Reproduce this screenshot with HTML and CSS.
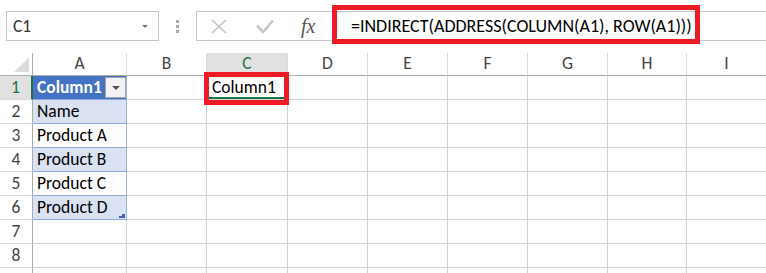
FILE: index.html
```html
<!DOCTYPE html>
<html>
<head>
<meta charset="utf-8">
<link rel="stylesheet" href="styles.css">
</head>
<body>
<div class="app">
  <div class="toolbar">
    <div class="namebox"><span>C1</span><span class="nb-arrow"></span></div>
    <div class="grip"><i></i><i></i><i></i></div>
    <div class="fbar">
      <svg class="ic-x" width="16" height="15" viewBox="0 0 16 15"><path d="M1 1 L15 14 M15 1 L1 14" stroke="#c3c3c3" stroke-width="1.5" fill="none"/></svg>
      <svg class="ic-ok" width="18" height="15" viewBox="0 0 18 15"><path d="M1 6.5 L7 13 L17 1.5" stroke="#c8c8c8" stroke-width="2.6" fill="none"/></svg>
      <span class="fx">fx</span>
      <span class="formula">=INDIRECT(ADDRESS(COLUMN(A1), ROW(A1)))</span>
    </div>
  </div>
  <div class="callout callout-formula"></div>
  <div class="sheet">
    <div class="corner"><svg width="33" height="23" viewBox="0 0 33 23"><polygon points="14,19 29,19 29,4" fill="#dcdcdc"/></svg></div>
    <div class="ch">A</div><div class="ch">B</div><div class="ch ch-sel">C</div><div class="ch">D</div><div class="ch">E</div><div class="ch">F</div><div class="ch">G</div><div class="ch">H</div><div class="ch">I</div>

    <div class="rh rh-sel">1</div>
    <div class="c t-head"><span>Column1</span><span class="filter-btn"><i></i></span></div>
    <div class="c"></div>
    <div class="c c-sel">Column1<div class="callout callout-cell"></div></div>
    <div class="c"></div><div class="c"></div><div class="c"></div><div class="c"></div><div class="c"></div><div class="c"></div>

    <div class="rh">2</div>
    <div class="c t-band">Name</div>
    <div class="c"></div><div class="c"></div><div class="c"></div><div class="c"></div><div class="c"></div><div class="c"></div><div class="c"></div><div class="c"></div>

    <div class="rh">3</div>
    <div class="c t-row">Product A</div>
    <div class="c"></div><div class="c"></div><div class="c"></div><div class="c"></div><div class="c"></div><div class="c"></div><div class="c"></div><div class="c"></div>

    <div class="rh">4</div>
    <div class="c t-band">Product B</div>
    <div class="c"></div><div class="c"></div><div class="c"></div><div class="c"></div><div class="c"></div><div class="c"></div><div class="c"></div><div class="c"></div>

    <div class="rh">5</div>
    <div class="c t-row">Product C</div>
    <div class="c"></div><div class="c"></div><div class="c"></div><div class="c"></div><div class="c"></div><div class="c"></div><div class="c"></div><div class="c"></div>

    <div class="rh">6</div>
    <div class="c t-band t-last">Product D<svg class="resize" width="6" height="4" viewBox="0 0 6 4"><polygon points="6,0 6,4 0,4 0,2 3,2 3,0" fill="#3f5fc2"/></svg></div>
    <div class="c"></div><div class="c"></div><div class="c"></div><div class="c"></div><div class="c"></div><div class="c"></div><div class="c"></div><div class="c"></div>

    <div class="rh">7</div>
    <div class="c"></div><div class="c"></div><div class="c"></div><div class="c"></div><div class="c"></div><div class="c"></div><div class="c"></div><div class="c"></div><div class="c"></div>

    <div class="rh">8</div>
    <div class="c"></div><div class="c"></div><div class="c"></div><div class="c"></div><div class="c"></div><div class="c"></div><div class="c"></div><div class="c"></div><div class="c"></div>

    <div class="rh"></div>
    <div class="c"></div><div class="c"></div><div class="c"></div><div class="c"></div><div class="c"></div><div class="c"></div><div class="c"></div><div class="c"></div><div class="c"></div>
  </div>
</div>
</body>
</html>
```

FILE: styles.css
```css
* { box-sizing: border-box; }

body {
  margin: 0;
  background: #fff;
  font-family: Carlito, Lato, "Liberation Sans", sans-serif;
  font-size: 17.5px;
  color: #000;
  overflow: hidden;
}

.app {
  position: relative;
  width: 766px;
  height: 273px;
  overflow: hidden;
}

/* ---------- toolbar ---------- */
.toolbar {
  display: flex;
  align-items: flex-start;
  height: 53px;
  padding: 11px 0 0 6px;
}

.namebox {
  width: 153px;
  height: 30px;
  border: 1px solid #c6c6c6;
  display: flex;
  align-items: center;
  justify-content: space-between;
  padding: 0 10px 0 6px;
  color: #333;
}

.nb-arrow {
  width: 0;
  height: 0;
  border-left: 3px solid transparent;
  border-right: 3px solid transparent;
  border-top: 3px solid #777;
}

.grip {
  margin-left: 17px;
  margin-top: 9px;
  display: flex;
  flex-direction: column;
  gap: 2px;
}

.grip i {
  display: block;
  width: 3px;
  height: 3px;
  background: #a6a6a6;
}

.fbar {
  margin-left: 17px;
  flex: 1;
  height: 30px;
  border: 1px solid #c6c6c6;
  border-right: 0;
  display: flex;
  align-items: center;
  white-space: nowrap;
}

.ic-x { margin-left: 14px; }
.ic-ok { margin-left: 29px; }

.fx {
  display: inline-block;
  width: 17px;
  margin-left: 27px;
  font-family: "Liberation Serif", serif;
  font-style: italic;
  font-size: 20px;
  color: #555;
  line-height: 1;
}

.formula {
  margin-left: 33px;
  font-size: 18px;
  color: #000;
}

.callout {
  position: absolute;
  border: 5px solid #ed1c24;
  z-index: 5;
}

.callout-formula {
  left: 332px;
  top: 5px;
  width: 368px;
  height: 39px;
}

/* ---------- sheet ---------- */
.sheet {
  display: grid;
  grid-template-columns: 33px 94px 80px 81px 80px 80px 80px 80px 79px 80px;
  grid-template-rows: 23px repeat(9, 24px);
}

.corner {
  border-right: 1px solid #ababab;
  border-bottom: 1px solid #ababab;
}
.corner svg { display: block; }

.ch {
  border-right: 1px solid #dadada;
  border-bottom: 1px solid #ababab;
  display: flex;
  align-items: flex-end;
  justify-content: center;
  padding-bottom: 3px;
  line-height: 1;
  color: #444;
}

.ch-sel {
  background: #e1e1e1;
  color: #217346;
  border-bottom: 2px solid #217346;
  padding-bottom: 2px;
}

.rh {
  border-right: 1px solid #ababab;
  border-bottom: 1px solid #dadada;
  display: flex;
  align-items: flex-end;
  justify-content: center;
  padding-bottom: 3px;
  line-height: 1;
  color: #444;
}

.rh-sel {
  background: #e1e1e1;
  color: #217346;
  border-right: 2px solid #217346;
}

.c {
  position: relative;
  border-right: 1px solid #d4d4d4;
  border-bottom: 1px solid #d4d4d4;
  display: flex;
  align-items: flex-end;
  padding: 0 4px 3px 4px;
  line-height: 1;
  white-space: nowrap;
}

.t-head {
  background: #4472c4;
  color: #fff;
  font-weight: 700;
  justify-content: space-between;
  padding-right: 0;
  border-right-color: #9bb2dd;
  border-bottom-color: #8ea9db;
}

.filter-btn {
  align-self: center;
  width: 21px;
  height: 21px;
  margin-bottom: -3px;
  border: 1px solid #a6a6a6;
  background: #f3f3f3;
  display: flex;
  align-items: center;
  justify-content: center;
}

.filter-btn i {
  width: 0;
  height: 0;
  border-left: 4px solid transparent;
  border-right: 4px solid transparent;
  border-top: 4px solid #555;
}

.t-band {
  background: #d9e1f2;
  border-right-color: #9bb2dd;
  border-bottom-color: #8ea9db;
}

.t-row {
  background: #fff;
  border-right-color: #9bb2dd;
  border-bottom-color: #8ea9db;
}

.resize {
  position: absolute;
  right: 1px;
  bottom: 1px;
}

.c-sel {
  box-shadow: inset 0 -2px 0 #217346;
  padding-left: 5px;
}

.callout-cell {
  left: -3px;
  top: -4px;
  width: 85px;
  height: 33px;
}
```
